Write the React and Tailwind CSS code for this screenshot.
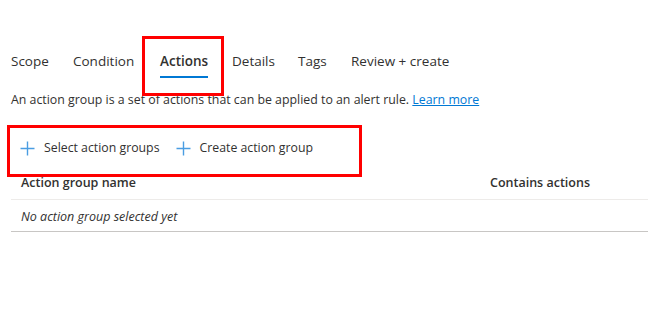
import { Plus } from 'lucide-react';

const tabs = [
    { label: 'Scope', w: 'w-[62px]' },
    { label: 'Condition', w: 'w-[87px]' },
    { label: 'Actions', w: 'w-[72px]', active: true },
    { label: 'Details', w: 'w-[66px]' },
    { label: 'Tags', w: 'w-[53px]' },
    { label: 'Review + create', w: 'w-[110px]' },
];

const PlusIcon = () => (
    <svg width="15" height="15" viewBox="0 0 15 15" className="shrink-0">
        <path d="M7.5 0.5v14M0.5 7.5h14" stroke="#4a9de2" strokeWidth="1.4" fill="none" />
    </svg>
);

const App = () => {
    return (
        <div className="relative w-[648px] h-[330px] bg-white text-[#323130] pl-[11px] pt-[40px] font-['Segoe_UI','Open_Sans',sans-serif] overflow-hidden">
            <div className="flex">
                {tabs.map(tab => (
                    <div key={tab.label} className={`${tab.w} shrink-0`}>
                        <div className="inline-flex flex-col pt-[11px]">
                            <span className={`text-[13.5px] leading-[20px] whitespace-nowrap ${tab.active ? 'font-semibold' : ''}`}>{tab.label}</span>
                            <span className={`mt-[5px] h-[2px] ${tab.active ? 'bg-[#0078d4]' : 'bg-transparent'}`}></span>
                        </div>
                    </div>
                ))}
            </div>

            <p className="mt-[13px] text-[12.35px] leading-[18px]">
                An action group is a set of actions that can be applied to an alert rule.{' '}
                <a href="#" className="text-[#0078d4] underline">Learn more</a>
            </p>

            <div className="mt-[21px] h-[36px] flex items-center pl-[9px] text-[12.3px]">
                <button className="flex items-center gap-[9px] pr-[16px]">
                    <PlusIcon />
                    <span>Select action groups</span>
                </button>
                <button className="flex items-center gap-[9px]">
                    <PlusIcon />
                    <span>Create action group</span>
                </button>
            </div>

            <table className="w-full mt-[7px] text-[12.5px] border-collapse">
                <thead>
                    <tr className="border-b border-[#edebe9]">
                        <th className="text-left font-semibold pl-[10px] pb-[6px] leading-[20px]">Action group name</th>
                        <th className="text-left font-semibold w-[158px] pb-[6px] leading-[20px]">Contains actions</th>
                    </tr>
                </thead>
                <tbody>
                    <tr className="border-b border-[#c8c6c4]">
                        <td className="pl-[10px] italic pt-[8px] pb-[5px] leading-[18px]" colSpan={2}>No action group selected yet</td>
                    </tr>
                </tbody>
            </table>

            {/* annotation boxes */}
            <div className="absolute left-[142px] top-[36px] w-[82px] h-[60px] border-[3px] border-[#ff0000]"></div>
            <div className="absolute left-[7px] top-[125px] w-[355px] h-[52px] border-[3px] border-[#ff0000]"></div>
        </div>
    );
};

export default App;
